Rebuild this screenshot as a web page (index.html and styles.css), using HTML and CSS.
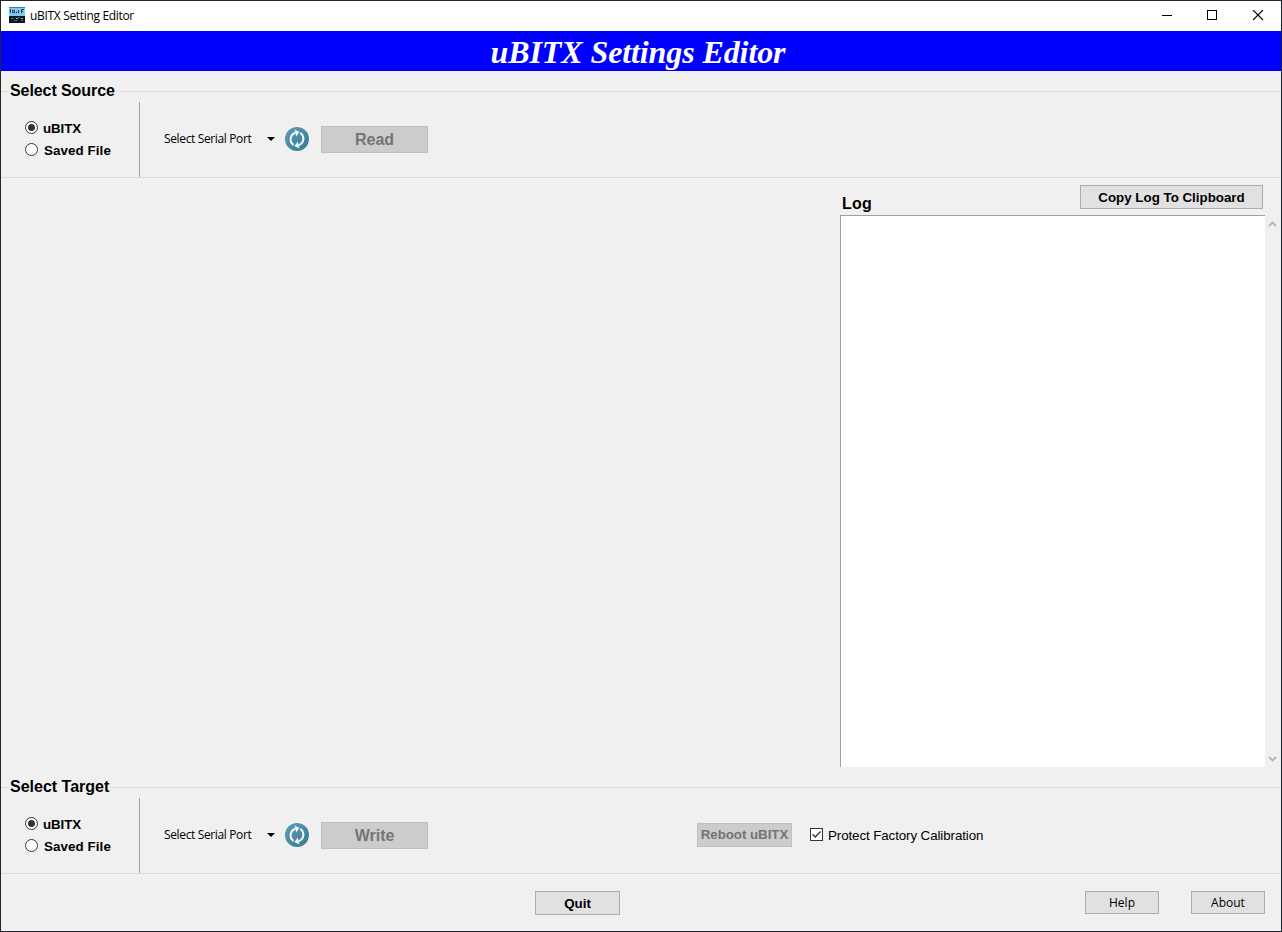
FILE: index.html
```html
<!DOCTYPE html>
<html lang="en">
<head>
<meta charset="utf-8">
<title>uBITX Setting Editor</title>
<link rel="stylesheet" href="styles.css">
</head>
<body>
<svg width="0" height="0" class="defs">
  <defs>
    <linearGradient id="disc" x1="0" y1="0" x2="1" y2="1">
      <stop offset="0" stop-color="#5c9fba"/>
      <stop offset="1" stop-color="#397792"/>
    </linearGradient>
    <symbol id="refresh" viewBox="0 0 24 24">
      <circle cx="12" cy="12" r="12" fill="url(#disc)"/>
      <path d="M8.6 18C4 14.6 4.8 7.6 10.6 5.8M15.4 6C20 9.4 19.2 16.4 13.4 18.2" fill="none" stroke="#f4fafc" stroke-width="2"/>
      <path d="M9.4 2.4L14.6 5L11 9.4L10.8 6.2ZM14.6 21.6L9.4 19L13 14.6L13.2 17.8Z" fill="#f4fafc"/>
    </symbol>
    <symbol id="radio-on" viewBox="0 0 13 13">
      <circle cx="6.5" cy="6.5" r="6" fill="#fff" stroke="#333"/>
      <circle cx="6.5" cy="6.5" r="3.5" fill="#333"/>
    </symbol>
    <symbol id="radio-off" viewBox="0 0 13 13">
      <circle cx="6.5" cy="6.5" r="6" fill="#fff" stroke="#333"/>
    </symbol>
  </defs>
</svg>
<div class="window">
  <header class="titlebar">
    <svg class="app-icon" width="16" height="16" viewBox="0 0 16 16">
      <rect width="16" height="16" fill="#0c1826"/>
      <rect width="16" height="9" fill="#86c6e6"/>
      <path d="M0 .5h16" stroke="#3b83b4"/>
      <path d="M1.5 2v4M3.5 3.5h2v2h-2zM7 6.5l1-2M9.5 3v3M12.5 6V2.5h2.5M12 4.5h2" fill="none" stroke="#1a4260"/>
      <path d="M2 11.5h3M9 10.5h2M5 13.5h3M12 13.5h2" stroke="#356d96"/>
      <path d="M7 11.5h2M12 11.5h2" stroke="#90abba"/>
    </svg>
    <span class="app-name">uBITX Setting Editor</span>
    <svg class="controls" width="102" height="11" viewBox="0 0 102 11" shape-rendering="crispEdges">
      <path d="M0 5.5h10M45.5.5h9v9h-9z" fill="none" stroke="#000"/>
      <path d="M91 0l10 10M101 0L91 10" fill="none" stroke="#000" stroke-width="1.1" shape-rendering="auto"/>
    </svg>
  </header>
  <h1 class="banner"><span>uBITX Settings Editor</span></h1>

  <section class="frame source">
    <div class="frame-head"><h2 class="legend source-legend">Select Source</h2></div>
    <div class="frame-body">
      <div class="choices">
        <div class="choice"><svg width="13" height="13"><use href="#radio-on"/></svg><span class="opt-device">uBITX</span></div>
        <div class="choice"><svg width="13" height="13"><use href="#radio-off"/></svg><span class="opt-file">Saved File</span></div>
      </div>
      <div class="port">
        <span class="port-name">Select Serial Port</span>
        <svg class="caret" width="8" height="4" viewBox="0 0 8 4"><path d="M0 0h8L4 4z"/></svg>
        <svg class="refresh" width="24" height="24"><use href="#refresh"/></svg>
        <button class="action disabled read" disabled><span>Read</span></button>
      </div>
    </div>
  </section>

  <main class="workspace">
    <section class="log">
      <div class="log-head">
        <h2 class="log-title">Log</h2>
        <button class="button copy"><span>Copy Log To Clipboard</span></button>
      </div>
      <div class="log-body">
        <div class="log-text"></div>
        <div class="scrollbar">
          <svg width="9" height="6" viewBox="0 0 9 6"><path d="M1 5L4.5 1.5L8 5" fill="none" stroke="#b4b4b4" stroke-width="1.9"/></svg>
          <svg width="9" height="6" viewBox="0 0 9 6"><path d="M1 1L4.5 4.5L8 1" fill="none" stroke="#b4b4b4" stroke-width="1.9"/></svg>
        </div>
      </div>
    </section>
  </main>

  <section class="frame">
    <div class="frame-head"><h2 class="legend target-legend">Select Target</h2></div>
    <div class="frame-body">
      <div class="choices">
        <div class="choice"><svg width="13" height="13"><use href="#radio-on"/></svg><span class="opt-device">uBITX</span></div>
        <div class="choice"><svg width="13" height="13"><use href="#radio-off"/></svg><span class="opt-file">Saved File</span></div>
      </div>
      <div class="port">
        <span class="port-name">Select Serial Port</span>
        <svg class="caret" width="8" height="4" viewBox="0 0 8 4"><path d="M0 0h8L4 4z"/></svg>
        <svg class="refresh" width="24" height="24"><use href="#refresh"/></svg>
        <button class="action disabled write" disabled><span>Write</span></button>
        <button class="reboot disabled" disabled><span>Reboot uBITX</span></button>
        <svg class="check" width="13" height="13" viewBox="0 0 13 13"><rect x=".5" y=".5" width="12" height="12" fill="#fff" stroke="#333"/><path d="M2.5 6.3L5.2 9L10.6 3.5" fill="none" stroke="#333" stroke-width="1.3"/></svg>
        <span class="protect">Protect Factory Calibration</span>
      </div>
    </div>
  </section>

  <footer class="footer">
    <button class="button quit"><span>Quit</span></button>
    <button class="button small help"><span>Help</span></button>
    <button class="button small about"><span>About</span></button>
  </footer>
</div>
</body>
</html>
```
FILE: styles.css
```css
* { box-sizing: border-box; }
body { margin: 0; font-family: "Liberation Sans", Arial, sans-serif; color: #000; }
h1, h2 { margin: 0; }
.defs { display: block; position: absolute; }
.window {
  width: 1282px; height: 932px; overflow: hidden;
  display: flex; flex-direction: column;
  background: #f0f0f0;
  border: 1px solid #24242a; border-right-color: #142536;
}
span, h2 { white-space: nowrap; }
svg { display: block; flex: none; }

.titlebar { height: 30px; flex: none; display: flex; align-items: center; background: #fff; padding: 0 17px 0 8px; }
.app-icon { margin-top: -2px; }
.app-name { margin-left: 5px; font: 12px/16px "Open Sans", sans-serif; letter-spacing: -0.33px; }
.controls { margin-left: auto; margin-top: -1px; }

.banner {
  height: 40px; flex: none; display: flex; justify-content: center; align-items: center;
  background: #00f; color: #fff; padding: 1px 6px 0 0;
  font: italic bold 32px/40px "Liberation Serif", "Times New Roman", serif;
  letter-spacing: -0.1px;
}

.frame { flex: none; border-bottom: 1px solid #dcdcdc; }
.source { padding-top: 10px; }
.frame-head { display: flex; align-items: center; height: 21px; }
.frame-head::before, .frame-head::after { content: ""; height: 1px; background: #dcdcdc; }
.frame-head::before { width: 8px; }
.frame-head::after { flex: 1; }
.legend { font-size: 16px; line-height: 20px; padding: 0 1px; margin-top: -1px; }
.source-legend { letter-spacing: -0.08px; }
.frame-body { display: flex; height: 75px; }
.choices { width: 139px; border-right: 1px solid #a0a0a0; padding: 15px 0 0 24px; display: flex; flex-direction: column; gap: 1px; }
.choice { display: flex; align-items: center; gap: 5px; height: 21px; font: bold 13.33px/15px "Liberation Sans", Arial, sans-serif; }
.choice span { margin-top: 1px; }
.opt-device { letter-spacing: -0.1px; }
.opt-file { letter-spacing: 0.1px; padding-left: 1px; }
.port { flex: 1; display: flex; align-items: center; padding: 0 0 2px 24px; }
.port-name { width: 103px; font: 12px/16px "Open Sans", sans-serif; letter-spacing: -0.36px; }
.caret { width: 8px; }
.refresh { margin: 0 12px 0 10px; }

button { font-family: "Liberation Sans", Arial, sans-serif; padding: 0; border-radius: 0; display: flex; align-items: center; justify-content: center; color: #000; flex: none; }
.button { background: #e1e1e1; border: 1px solid #adadad; font-size: 13.33px; }
.disabled { background: #ccc; border: 1px solid #bfbfbf; color: #747474; font-weight: bold; }
.action { width: 107px; height: 27px; font-size: 16px; margin-top: 1px; }
.action span { padding-top: 1px; }
.reboot { width: 95px; height: 24px; font-size: 13.33px; margin-left: 269px; letter-spacing: -0.05px; }
.check { margin-left: 18px; }
.protect { margin: 2px 0 0 5px; font-size: 13.33px; line-height: 15px; letter-spacing: -0.09px; }

.workspace { height: 599px; flex: none; display: flex; justify-content: flex-end; padding-top: 7px; }
.log { width: 441px; }
.log-head { display: flex; justify-content: space-between; height: 30px; padding-right: 18px; }
.log-title { font-size: 16px; line-height: 20px; padding: 9px 0 0 2px; letter-spacing: 0.2px; }
.copy { width: 183px; height: 24px; font-weight: bold; }
.log-body { display: flex; height: 552px; }
.log-text { width: 425px; background: #fff; border: solid #a0a0a0; border-width: 1px 0 0 1px; }
.scrollbar { width: 16px; display: flex; flex-direction: column; justify-content: space-between; padding: 6px 0 5px 3px; }

.footer { flex: 1; display: flex; align-items: flex-start; padding: 17px 16px 0 534px; }
.quit { width: 85px; height: 24px; font-weight: bold; }
.small { width: 74px; height: 23px; font: 12px/16px "Open Sans", sans-serif; }
.help { margin-left: auto; }
.about { margin-left: 32px; }
```
